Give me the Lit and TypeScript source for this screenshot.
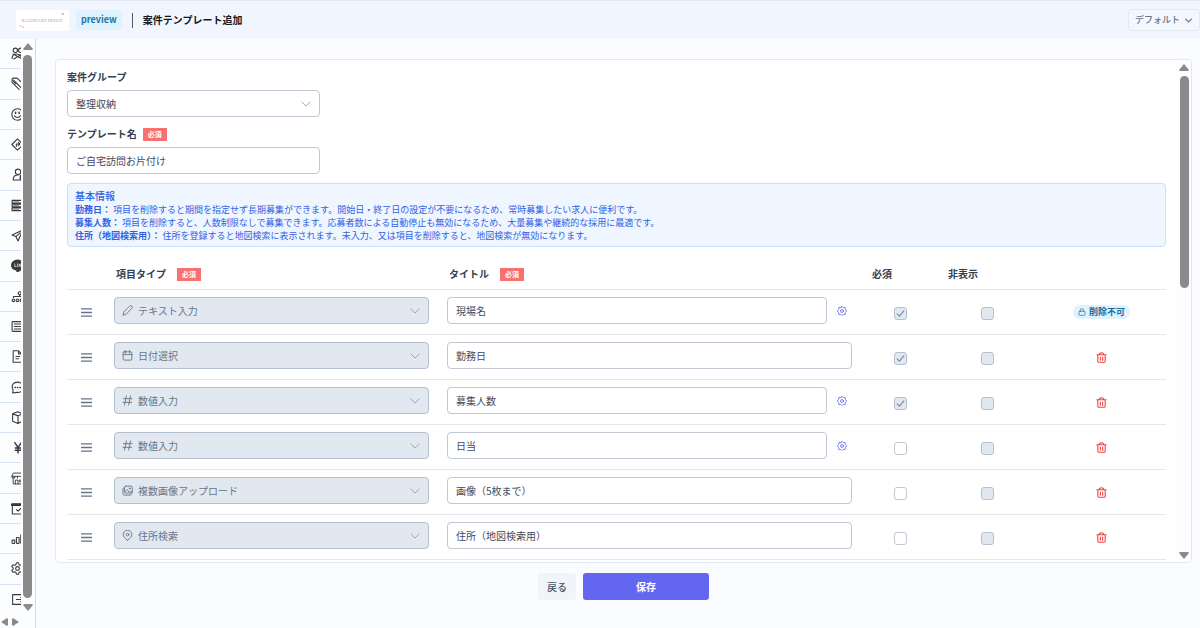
import { LitElement, html, css, svg, nothing, type TemplateResult } from "lit";
import { customElement, property } from "lit/decorators.js";

/* Icon shapes, drawn on a 24 × 24 grid with a stroked outline. */
const ICONS: Record<string, TemplateResult> = {
  members: svg`<circle cx="8" cy="6" r="4"/><circle cx="18" cy="6" r="4"/><path d="M2 21c0-6 4-8 8-8s8 2 10 8M4 13l16 9M22 12 5 22"/>`,
  tags: svg`<path d="M2 4v6l13 13M2 4l2-2h7l12 11M6 7l13 13"/><path d="M5 5.500v3l4 4"/>`,
  smile: svg`<circle cx="12" cy="12" r="10.5"/><path d="M6.500 14.500c2 4 9 4 11 0"/><path d="M8.500 8v2M15 8v2" stroke-width="2.800"/>`,
  route: svg`<path d="M12 1.500 22.500 12 12 22.500 1.500 12z"/><path d="M10 15v-4h6M13.500 8l3 3-3 3"/>`,
  worker: svg`<circle cx="13" cy="7" r="5"/><path d="M4 22c0-6 4-9 9-9M4 22h12"/><path d="M17 14v8h6v-8z" fill="currentColor"/>`,
  stack: svg`<path d="M2 2.500h20v5H2zM2 9.500h20v5H2zM2 16.500h20v5H2z"/><path d="M5 5h9M5 12h9M5 19h9" stroke-width="1"/>`,
  send: svg`<path d="M22 2 2 11l7 3 4 8zM9 14l8-7"/>`,
  line: svg`<path d="M12 2C6 2 1 6 1 11.500S6 20 11 20.500V24c6-3 12-7 12-12.500S18 2 12 2z" fill="currentColor"/><path d="M7 9v5h2.500M12 9v5M15 14V9l3 5V9" stroke="#fff" stroke-width="1.200"/>`,
  nodes: svg`<circle cx="4.500" cy="19" r="2.500"/><circle cx="12" cy="19" r="2.500"/><circle cx="19.500" cy="19" r="2.500"/><circle cx="16" cy="6" r="2.800"/><path d="M4.500 14v-2H20v2M16 9v3"/>`,
  list: svg`<rect x="2" y="3" width="20" height="18" rx="1.500"/><path d="M6 7.500h12M6 12h12M6 16.500h12"/>`,
  file: svg`<path d="M14 1.500H4v21h16v-15zM14 1.500v6h6M9 12h7M9 16h5"/>`,
  chat: svg`<path d="M3 22l1-5C-1 8 5 2 12 2s11 5 11 10-5 10-12 9z"/><path d="M7.500 12h.5M12 12h.5M16.500 12h.5" stroke-width="3"/>`,
  box: svg`<path d="M12 1.500 3 5v14l10 4 8-4V5zM3 5l10 4 8-4M13 9v14"/>`,
  yen: svg`<path d="m7 3 6 9 6-9M13 12v10M8 13h10M8 17h10" stroke-width="2.600"/>`,
  shop: svg`<path d="M5 2h16l2 6H2zM4 11v11h18V11M2 8v3h5V8M12 11V8M8 22v-7h5v7M16 15h4v3h-4z" stroke-width="1.700"/>`,
  schedule: svg`<path d="M2.500 4h19v18h-19z"/><path d="M2 5h20" stroke-width="5"/><path d="m10 14 3 3 5-5"/>`,
  chart: svg`<rect x="2" y="15" width="5" height="6" rx="1"/><rect x="10" y="10" width="5" height="11" rx="1"/><rect x="18" y="5" width="4" height="16" rx="1"/>`,
  settings: svg`<path d="M10 1.500h4l1 3.500 2 1 3.500-1 2 3.500L20 11v2l2.500 2.500-2 3.500-3.500-1-2 1-1 3.500h-4L9 19l-2-1-3.500 1-2-3.500L4 13v-2L1.500 8.500l2-3.500L7 6l2-1z"/><circle cx="12" cy="12" r="3.500"/>`,
  logout: svg`<path d="M20 6V3H3v18h17v-3M10 12h12M18 8l4 4-4 4"/>`,
  pencil: svg`<path d="M2.500 21.500 4 15 16.500 2.500a3.200 3.200 0 0 1 5 5L9 20z"/>`,
  calendar: svg`<rect x="2.500" y="4" width="19" height="18" rx="2"/><path d="M2.500 10h19M7.500 1v6M16.500 1v6"/>`,
  hash: svg`<path d="M9.500 2 5.500 22M18.500 2l-4 20M3 8h19M2 16h19"/>`,
  images: svg`<rect x="5.500" y="2.500" width="17" height="15" rx="2.500"/><path d="M5 6c-2 0-3 1-3 3v10c0 2 1 3 3 3h13c2 0 3-1 3-3M6 15l5-5 5 6 3-3 3 3"/><circle cx="17" cy="7.500" r="1.300"/>`,
  pin: svg`<path d="M12 22.500C6 18 2.500 14 2.500 10a9.500 9.500 0 0 1 19 0c0 4-3.500 8-9.500 12.500z"/><circle cx="12" cy="10" r="3"/>`,
  cog: svg`<path d="m12 1 3 3 4.500-.500L20 8l3 4-3 4-.500 4.500L15 20l-3 3-3-3-4.500.500L4 16l-3-4 3-4 .500-4.500L9 4z"/><circle cx="12" cy="12" r="3.500"/>`,
  trash: svg`<path d="M2 6h20M7 6c0-6 10-6 10 0M4 6v14c0 1.500 1 2.500 2.500 2.500h11c1.500 0 2.500-1 2.500-2.500V6M9.500 11v7M14.500 11v7"/>`,
  lock: svg`<rect x="3" y="10" width="18" height="12" rx="2.500"/><path d="M7 10V7a5 5 0 0 1 10 0v3"/>`,
  grip: svg`<path d="M1 4h22M1 12h22M1 20h22"/>`,
  chevron: svg`<path d="m2 7 10 10L22 7"/>`,
  check: svg`<path d="m3 13 6 6L21 5"/>`,
};

@customElement("ui-icon")
export class UiIcon extends LitElement {
  @property() name = "";
  static styles = css`
    :host { display: inline-flex; }
    svg {
      width: 100%;
      height: 100%;
      fill: none;
      stroke: currentColor;
      stroke-width: var(--icon-stroke, 2);
      stroke-linecap: round;
      stroke-linejoin: round;
    }
  `;
  render() {
    return html`<svg viewBox="0 0 24 24" aria-hidden="true">${ICONS[this.name] ?? nothing}</svg>`;
  }
}

@customElement("scroll-rail")
export class ScrollRail extends LitElement {
  static styles = css`
    :host {
      display: flex;
      flex-direction: column;
      align-items: center;
      color: #8a8a8a;
    }
    svg { width: 10px; height: 7px; flex: none; fill: currentColor; }
    .track { flex: 1; align-self: center; width: 9px; margin: 5px 0 6px; }
    .thumb { height: var(--thumb, 100%); border-radius: 5px; background: currentColor; }
  `;
  render() {
    return html`
      <svg viewBox="0 0 10 7" aria-hidden="true"><path d="M5 0 10 6 9 7H1L0 6z" /></svg>
      <div class="track"><div class="thumb"></div></div>
      <svg viewBox="0 0 10 7" aria-hidden="true"><path d="M5 7 10 1 9 0H1L0 1z" /></svg>
    `;
  }
}

interface Field {
  icon: string;
  type: string;
  title: string;
  config?: boolean;
  required?: boolean;
  locked?: boolean;
}

const FIELDS: Field[] = [
  { icon: "pencil", type: "テキスト入力", title: "現場名", config: true, required: true, locked: true },
  { icon: "calendar", type: "日付選択", title: "勤務日", required: true },
  { icon: "hash", type: "数値入力", title: "募集人数", config: true, required: true },
  { icon: "hash", type: "数値入力", title: "日当", config: true },
  { icon: "images", type: "複数画像アップロード", title: "画像（5枚まで）" },
  { icon: "pin", type: "住所検索", title: "住所（地図検索用）" },
];

const NOTES: [string, string][] = [
  ["勤務日：", "項目を削除すると期間を指定せず長期募集ができます。開始日・終了日の設定が不要になるため、常時募集したい求人に便利です。"],
  ["募集人数：", "項目を削除すると、人数制限なしで募集できます。応募者数による自動停止も無効になるため、大量募集や継続的な採用に最適です。"],
  ["住所（地図検索用）：", "住所を登録すると地図検索に表示されます。未入力、又は項目を削除すると、地図検索が無効になります。"],
];

const NAV: [string, string][] = [
  ["members", "会員"], ["tags", "タグ"], ["smile", "スタッフ"], ["route", "ルート"], ["worker", "担当者"],
  ["stack", "データ"], ["send", "配信"], ["line", "LINE"], ["nodes", "組織"], ["list", "一覧"],
  ["file", "書類"], ["chat", "チャット"], ["box", "商品"], ["yen", "支払い"], ["shop", "店舗"],
  ["schedule", "予定"], ["chart", "分析"], ["settings", "設定"], ["logout", "ログアウト"],
];

@customElement("app-root")
export class AppRoot extends LitElement {
  static styles = css`
    :host {
      display: flex;
      flex-direction: column;
      height: 100vh;
      overflow: hidden;
      background: #fafcff;
      color: #334155;
      font: 10px/14px "Noto Sans CJK JP", "Noto Sans", sans-serif;
    }
    *, *::before, *::after { box-sizing: border-box; }
    input, select, button { font: inherit; color: inherit; margin: 0; }

    .topbar {
      display: flex;
      align-items: center;
      height: 39px;
      flex: none;
      padding-left: 16px;
      background: #f1f6fe;
      border-top: 1px solid #e2e8f4;
    }
    .logo { width: 53px; height: 21px; background: #fff; border-radius: 2px; }
    .logo-text { font: 4px "Liberation Serif", serif; fill: #a69aa0; }
    .logo-mark { fill: none; stroke: #f2a7b5; stroke-width: 1; }
    .env {
      margin-left: 7px;
      padding: 3px 5px;
      border-radius: 3px;
      background: #e0f2fe;
      color: #1b76a8;
      font-size: 9px;
      font-weight: 700;
    }
    .rule { width: 1px; height: 15px; margin: 0 10px; background: #555b66; }
    .page-title { margin: 0; font-size: 10px; font-weight: 700; color: #16181d; }
    .theme {
      position: relative;
      display: flex;
      align-items: center;
      margin-left: auto;
      color: #64748b;
      font-size: 9px;
      font-weight: 500;
    }
    .theme select {
      appearance: none;
      width: 72px;
      height: 22px;
      padding: 0 0 0 6px;
      border: 1px solid #e2e8f0;
      border-radius: 4px;
      background: #f4f8fe;
    }
    .theme ui-icon { position: absolute; right: 8px; width: 7px; height: 7px; --icon-stroke: 4; pointer-events: none; }

    .body { display: flex; flex: 1; min-height: 0; }
    .side {
      display: flex;
      flex-direction: column;
      width: 36px;
      flex: none;
      border-right: 1px solid #c9dbf5;
      background: #fcfdff;
    }
    .side-main { display: flex; flex: 1; min-height: 0; }
    .nav { display: flex; flex-direction: column; width: 21px; overflow: hidden; }
    .nav a {
      display: flex;
      align-items: center;
      flex: 1;
      min-height: 0;
      padding-left: 11px;
      border-bottom: 1px solid #d5e2f6;
      color: #3a3a3a;
    }
    .nav a:last-child { border-bottom-color: transparent; }
    .nav ui-icon { width: 13px; height: 13px; flex: none; }
    .side scroll-rail { width: 13px; padding: 4px 0; }
    .side-foot { display: flex; gap: 4px; height: 13px; padding: 3px 0 0 1px; }
    .side-foot svg { width: 7px; height: 8px; fill: #8a8a8a; }

    .main { display: flex; flex-direction: column; flex: 1; min-width: 0; padding: 20px 8px 28px 19px; }
    .panel {
      display: flex;
      flex: 1;
      min-height: 0;
      overflow: hidden;
      border: 1px solid #e2e8f0;
      border-radius: 4px;
      background: #fff;
    }
    .form { flex: 1; min-width: 0; padding: 10px 11px 0; }
    .panel scroll-rail { width: 14px; padding: 4px 0 3px; --thumb: 45%; background: #fdfdfe; }
    .label { display: flex; align-items: center; gap: 6px; height: 14px; margin-bottom: 6px; font-weight: 700; }
    .must {
      display: inline-flex;
      align-items: center;
      justify-content: center;
      width: 24px;
      height: 13px;
      background: #f87171;
      color: #fff;
      font-size: 7px;
      line-height: 13px;
      font-weight: 700;
    }
    .field { position: relative; display: flex; align-items: center; width: 253px; margin-bottom: 10px; }
    .box {
      appearance: none;
      display: block;
      width: 100%;
      min-width: 0;
      height: 27px;
      padding: 0 8px;
      border: 1px solid #c0c8d4;
      border-radius: 4px;
      background: #fff;
      color: #3f4a5c;
      outline: none;
    }
    .caret { position: absolute; right: 9px; width: 10px; height: 10px; color: #8b98ab; pointer-events: none; }
    .info {
      margin-top: -1px;
      padding: 5px 7px 4px;
      border: 1px solid #c8dffd;
      border-radius: 4px;
      background: #eff6ff;
      color: #3162e4;
    }
    .info h2 { margin: 0; font: inherit; font-weight: 500; }
    .info p { margin: 0; font-size: 9px; line-height: 13px; }

    .fields { width: 100%; margin-top: 8px; table-layout: fixed; border-collapse: separate; border-spacing: 0; }
    .c-grip { width: 39px; }
    .c-type { width: 333px; }
    .c-must { width: 76px; }
    .c-hide { width: 99px; }
    .c-act { width: 129px; }
    th { height: 35px; padding: 4px 10px 0; border-bottom: 1px solid #e5e7eb; text-align: left; font-weight: 700; }
    .head { display: flex; align-items: center; gap: 11px; }
    td { height: 45px; padding: 0; border-bottom: 1px solid #e5e7eb; }
    .cell-box { padding: 7px 10px 10px 8px; vertical-align: top; }
    .cell-mid { padding-bottom: 2px; text-align: center; vertical-align: middle; }
    .picker { position: relative; display: flex; align-items: center; color: #66758a; }
    .picker .box { padding-left: 23px; border-color: #b4bfd1; background: #e2e8f0; color: #66758a; opacity: 1; }
    .kind { position: absolute; left: 8px; width: 11px; height: 11px; }
    .title-row { display: flex; align-items: center; }
    .plain {
      display: inline-flex;
      align-items: center;
      justify-content: center;
      padding: 0;
      border: 0;
      background: none;
      vertical-align: middle;
    }
    .gear { flex: none; width: 10px; margin: 0 5px 0 10px; color: #6366f1; }
    .gear ui-icon { width: 10px; height: 10px; }
    .grip { color: #64748b; }
    .grip ui-icon { width: 11px; height: 11px; --icon-stroke: 3; }
    .trash { color: #ef4444; }
    .trash ui-icon { width: 11px; height: 11px; --icon-stroke: 2.4; }
    .tick { display: inline-grid; place-items: center; margin-top: 5px; vertical-align: middle; }
    .tick > * { grid-area: 1 / 1; }
    .tick input { appearance: none; width: 13px; height: 13px; border: 1px solid #c0c8d4; border-radius: 3px; background: #fff; }
    .tick input:disabled { border-color: #b4c0d0; background: #e2e8f0; }
    .tick ui-icon { width: 9px; height: 9px; color: #7b8aa0; --icon-stroke: 3; pointer-events: none; }
    .locked {
      display: inline-flex;
      align-items: center;
      gap: 3px;
      height: 14px;
      padding: 0 5px;
      margin-top: 2px;
      border-radius: 7px;
      background: #e0f2fe;
      color: #1470a3;
      font-size: 9px;
      font-weight: 700;
      vertical-align: middle;
    }
    .locked ui-icon { width: 8px; height: 8px; }

    .actions { display: flex; justify-content: center; gap: 7px; margin-top: 10px; }
    .btn { height: 27px; padding: 0 9px; border: 0; border-radius: 3px; background: #f1f5f9; color: #475569; font-weight: 500; }
    .save { width: 126px; background: #6366f1; color: #fff; font-weight: 700; }
  `;

  private tick(label: string, checked: boolean, disabled: boolean) {
    return html`<span class="tick">
      <input type="checkbox" aria-label=${label} .checked=${checked} ?disabled=${disabled} />
      ${checked ? html`<ui-icon name="check"></ui-icon>` : nothing}
    </span>`;
  }

  private row(f: Field) {
    return html`<tr>
      <td class="cell-mid">
        <button class="plain grip" aria-label="並べ替え"><ui-icon name="grip"></ui-icon></button>
      </td>
      <td class="cell-box">
        <div class="picker">
          <select class="box" aria-label="項目タイプ" disabled><option>${f.type}</option></select>
          <ui-icon class="kind" name=${f.icon}></ui-icon>
          <ui-icon class="caret" name="chevron"></ui-icon>
        </div>
      </td>
      <td class="cell-box">
        <div class="title-row">
          <input class="box" type="text" aria-label="タイトル" .value=${f.title} />
          ${f.config ? html`<button class="plain gear" aria-label="設定"><ui-icon name="cog"></ui-icon></button>` : nothing}
        </div>
      </td>
      <td class="cell-mid">${this.tick("必須", !!f.required, !!f.required)}</td>
      <td class="cell-mid">${this.tick("非表示", false, true)}</td>
      <td class="cell-mid">
        ${f.locked
          ? html`<span class="locked"><ui-icon name="lock"></ui-icon>削除不可</span>`
          : html`<button class="plain trash" aria-label="削除"><ui-icon name="trash"></ui-icon></button>`}
      </td>
    </tr>`;
  }

  render() {
    return html`
      <header class="topbar">
        <svg class="logo" viewBox="0 0 53 21" role="img" aria-label="ロゴ">
          <text class="logo-text" x="26" y="12" text-anchor="middle">KAGURI LIFE DESIGN</text>
          <path class="logo-mark" d="M45 3l3 2M46 5l2-2M4 15l1 2M6 16l2 2" />
        </svg>
        <span class="env">preview</span>
        <span class="rule"></span>
        <h1 class="page-title">案件テンプレート追加</h1>
        <div class="theme">
          <select aria-label="テーマ"><option>デフォルト</option></select>
          <ui-icon name="chevron"></ui-icon>
        </div>
      </header>
      <div class="body">
        <aside class="side">
          <div class="side-main">
            <nav class="nav">
              ${NAV.map(([icon, label]) => html`<a href="#${icon}" aria-label=${label}><ui-icon name=${icon}></ui-icon></a>`)}
            </nav>
            <scroll-rail></scroll-rail>
          </div>
          <div class="side-foot">
            <svg viewBox="0 0 7 8" aria-hidden="true"><path d="M0 4 6 0 7 1V7L6 8z" /></svg>
            <svg viewBox="0 0 7 8" aria-hidden="true"><path d="M7 4 1 0 0 1V7L1 8z" /></svg>
          </div>
        </aside>
        <main class="main">
          <section class="panel">
            <div class="form">
              <label class="label" for="group">案件グループ</label>
              <div class="field">
                <select class="box" id="group"><option>整理収納</option></select>
                <ui-icon class="caret" name="chevron"></ui-icon>
              </div>
              <label class="label" for="name">テンプレート名<span class="must">必須</span></label>
              <div class="field"><input class="box" id="name" type="text" .value=${"ご自宅訪問お片付け"} /></div>
              <div class="info">
                <h2>基本情報</h2>
                ${NOTES.map(([name, text]) => html`<p><b>${name}</b> ${text}</p>`)}
              </div>
              <table class="fields">
                <colgroup>
                  <col class="c-grip" /><col class="c-type" /><col /><col class="c-must" /><col class="c-hide" /><col class="c-act" />
                </colgroup>
                <thead>
                  <tr>
                    <th></th>
                    <th><div class="head">項目タイプ<span class="must">必須</span></div></th>
                    <th><div class="head">タイトル<span class="must">必須</span></div></th>
                    <th>必須</th>
                    <th>非表示</th>
                    <th></th>
                  </tr>
                </thead>
                <tbody>${FIELDS.map((f) => this.row(f))}</tbody>
              </table>
            </div>
            <scroll-rail></scroll-rail>
          </section>
          <div class="actions">
            <button class="btn">戻る</button>
            <button class="btn save">保存</button>
          </div>
        </main>
      </div>
    `;
  }
}
